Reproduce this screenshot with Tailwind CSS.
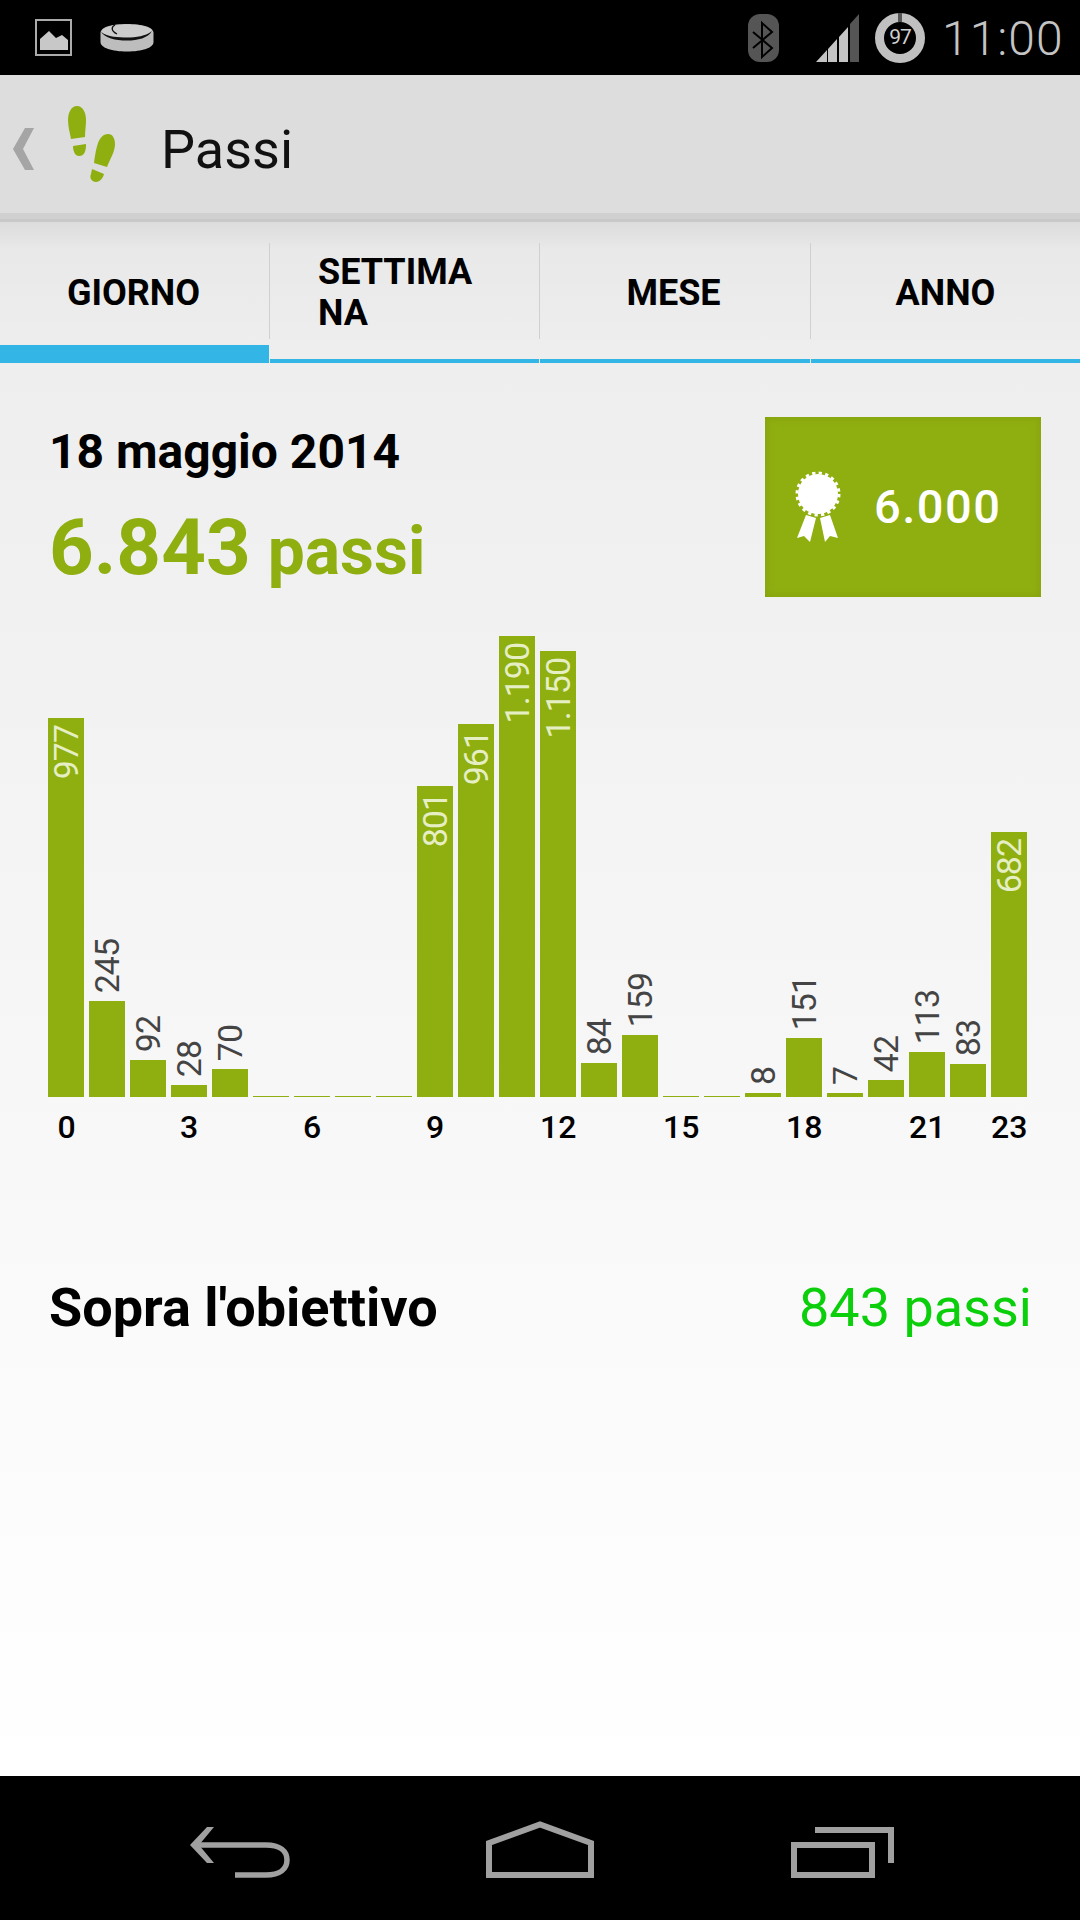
<!DOCTYPE html>
<html lang="it">
<head>
  <meta charset="UTF-8" />
  <title>Passi</title>
  <script src="https://cdn.jsdelivr.net/npm/@tailwindcss/browser@4"></script>
</head>
<body class="bg-black">
  <div class="w-[1080px] h-[1920px] flex flex-col overflow-hidden font-[Roboto,sans-serif]">

    <!-- Status bar -->
    <div class="h-[75px] bg-black flex items-center shrink-0">
      <svg class="ml-[35px] w-[37px] h-[37px] -mt-[1px]" viewBox="0 0 37 37">
        <rect x="1" y="1" width="35" height="35" fill="none" stroke="#ababab" stroke-width="2"/>
        <path d="M5 31 V20 L14 12 L21 19 L27 16 L33 21 V31 Z" fill="#c8c8c8"/>
      </svg>
      <svg class="ml-[28px] w-[54px] h-[30px]" viewBox="0 0 54 30">
        <path d="M0.5 10 C0.5 4 12 1 27 1 C42 1 53.5 4 53.5 10 V19 C53.5 25 42 28.500 27 28.500 C12 28.500 0.500 25 0.500 19 Z" fill="#bdbdbd"/>
        <ellipse cx="27" cy="8" rx="25" ry="6.500" fill="#cccccc"/>
        <path d="M1 9 C8 14 18 14.500 27 14.500 C36 14.500 46 13 52 8 C48 15 38 17.500 27 17.500 C15 17.500 5 15 1 9 Z" fill="#111"/>
        <path d="M15 2 C11 4 11 8 17 11" fill="none" stroke="#111" stroke-width="1.300"/>
      </svg>
      <svg class="ml-[594px] w-[31px] h-[48px]" viewBox="0 0 31 48">
        <rect width="31" height="48" rx="12" fill="#555555"/>
        <path d="M5 18 L24 34 L14 43 V9 L24 18 L5 34" fill="none" stroke="#000" stroke-width="2"/>
      </svg>
      <svg class="ml-[37px] w-[43px] h-[48px]" viewBox="0 0 43 48">
        <path d="M0 48 L11 36 V48 Z M12 35 L21 25 V48 H12 Z M23 23 L32 13 V48 H23 Z" fill="#c4c4c4"/>
        <path d="M34 10 L43 0 V48 H34 Z" fill="#555555"/>
      </svg>
      <div class="ml-[16px] relative w-[50px] h-[50px] rounded-full border-[9px] border-[#c0c0c0] flex items-center justify-center">
        <div class="absolute -top-[9px] left-[14px] w-[4px] h-[9px] bg-[#555555]"></div>
        <span class="text-[21px] leading-none text-[#cfcfcf] tracking-[-1px]">97</span>
      </div>
      <span class="ml-[17px] mt-[2px] text-[48px] leading-none font-light text-[#c4c4c4] tracking-[1px]">11:00</span>
    </div>

    <!-- Action bar -->
    <div class="h-[138px] bg-[#dddddd] flex items-center shrink-0">
      <svg class="ml-[13px] w-[21px] h-[42px] mt-[9px]" viewBox="0 0 21 42">
        <path d="M12 0 H21 L10 21 L21 42 H12 L0 21 Z" fill="#a5a5a5"/>
      </svg>
      <svg class="ml-[32px] w-[52px] h-[78px]" viewBox="0 0 52 78">
        <g fill="#8fae10">
          <path d="M11 1 C17 1 20 8 20 15 C20 21 19 26 19 32 L5 34 C4 28 2 22 2 15 C2 8 5 1 11 1 Z"/>
          <path d="M7 41 L20 39 C20 45 19 51 13 51 C9 51 7 46 7 41 Z"/>
          <path d="M42 29 C47 29 49 34 49 39 C49 47 44 54 41 62 L28 58 C29 50 30 44 32 38 C34 33 37 29 42 29 Z"/>
          <path d="M26 64 L38 69 C37 73 34 77 30 77 C26 77 23 73 25 69 Z"/>
        </g>
      </svg>
      <span class="ml-[43px] mt-[12px] text-[54px] leading-none text-[#111111]">Passi</span>
    </div>
    <div class="h-[6px] bg-[#d0d0d0] shrink-0"></div>
    <div class="h-[3px] bg-[#c8c8c8] shrink-0"></div>

    <!-- Main content -->
    <div class="flex-1 flex flex-col bg-[linear-gradient(to_bottom,#dcdcdc_0px,#e9e9e9_28px,#eeeeee_130px,#f1f1f1_380px,#f8f8f8_930px,#ffffff_1554px)]">

      <!-- Tabs -->
      <div class="mt-[21px] flex h-[120px] text-[36px] leading-[41px] font-bold text-black">
        <div class="w-[270px] flex flex-col">
          <div class="h-[96px] border-r border-[#d0d0d0] flex items-center justify-center pt-[4px] pr-[2px]">GIORNO</div>
          <div class="mt-auto h-[18px] mr-[1px] bg-[#33b5e5]"></div>
        </div>
        <div class="w-[270px] flex flex-col">
          <div class="h-[96px] border-r border-[#d0d0d0] flex items-center pl-[48px] pt-[4px]">SETTIMA<br />NA</div>
          <div class="mt-auto h-[4px] mr-[1px] bg-[#33b5e5]"></div>
        </div>
        <div class="w-[271px] flex flex-col">
          <div class="h-[96px] border-r border-[#d0d0d0] flex items-center justify-center pt-[4px] pr-[3px]">MESE</div>
          <div class="mt-auto h-[4px] mr-[1px] bg-[#33b5e5]"></div>
        </div>
        <div class="w-[269px] flex flex-col">
          <div class="h-[96px] flex items-center justify-center pt-[4px]">ANNO</div>
          <div class="mt-auto h-[4px] bg-[#33b5e5]"></div>
        </div>
      </div>

      <!-- Day summary -->
      <div class="mt-[54px] pl-[49px] pr-[39px] flex justify-between">
        <div class="pt-[7px]">
          <div class="text-[48px] leading-[56px] font-bold text-black">18 maggio 2014</div>
          <div class="mt-[23px] flex items-baseline gap-[17px] font-bold text-[#8fae10]">
            <span class="text-[78px] leading-[90px]">6.843</span>
            <span class="text-[66px] leading-[90px]">passi</span>
          </div>
        </div>
        <div class="w-[276px] h-[180px] bg-[#8fae10] shadow-[inset_0_0_8px_#849f0e] flex items-center">
          <svg class="ml-[28px] w-[50px] h-[74px]" viewBox="0 0 50 74">
            <circle cx="25" cy="24" r="20" fill="#fff"/>
            <circle cx="25" cy="24" r="21" fill="none" stroke="#fff" stroke-width="3" stroke-dasharray="3.300 3.300"/>
            <path d="M13 45 L23 48 L17 72 L11 66 L4 68 Z M27 48 L37 45 L45 68 L37 66 L32 72 Z" fill="#fff"/>
          </svg>
          <span class="ml-[31px] -mt-[2px] text-[47px] leading-none font-medium tracking-[1.500px] text-white">6.000</span>
        </div>
      </div>

      <!-- Hourly chart -->
      <div class="ml-[48px] h-[500px] flex items-end gap-[5px] text-[34px] leading-[36px] tracking-[-1px]">
        <div class="w-[36px] h-[379px] bg-[#8fae10] flex justify-center pt-[7px] text-[#e6efc4]"><span class="h-fit [writing-mode:vertical-rl] rotate-180">977</span></div>
        <div class="w-[36px] flex flex-col items-center text-[#444444]"><span class="mb-[8px] [writing-mode:vertical-rl] rotate-180">245</span><div class="w-full h-[96px] bg-[#8fae10]"></div></div>
        <div class="w-[36px] flex flex-col items-center text-[#444444]"><span class="mb-[8px] [writing-mode:vertical-rl] rotate-180">92</span><div class="w-full h-[37px] bg-[#8fae10]"></div></div>
        <div class="w-[36px] flex flex-col items-center text-[#444444]"><span class="mb-[8px] [writing-mode:vertical-rl] rotate-180">28</span><div class="w-full h-[12px] bg-[#8fae10]"></div></div>
        <div class="w-[36px] flex flex-col items-center text-[#444444]"><span class="mb-[8px] [writing-mode:vertical-rl] rotate-180">70</span><div class="w-full h-[28px] bg-[#8fae10]"></div></div>
        <div class="w-[36px] h-[1px] bg-[#8fae10]"></div>
        <div class="w-[36px] h-[1px] bg-[#8fae10]"></div>
        <div class="w-[36px] h-[1px] bg-[#8fae10]"></div>
        <div class="w-[36px] h-[1px] bg-[#8fae10]"></div>
        <div class="w-[36px] h-[311px] bg-[#8fae10] flex justify-center pt-[7px] text-[#e6efc4]"><span class="h-fit [writing-mode:vertical-rl] rotate-180">801</span></div>
        <div class="w-[36px] h-[373px] bg-[#8fae10] flex justify-center pt-[7px] text-[#e6efc4]"><span class="h-fit [writing-mode:vertical-rl] rotate-180">961</span></div>
        <div class="w-[36px] h-[461px] bg-[#8fae10] flex justify-center pt-[7px] text-[#e6efc4]"><span class="h-fit [writing-mode:vertical-rl] rotate-180">1.190</span></div>
        <div class="w-[36px] h-[446px] bg-[#8fae10] flex justify-center pt-[7px] text-[#e6efc4]"><span class="h-fit [writing-mode:vertical-rl] rotate-180">1.150</span></div>
        <div class="w-[36px] flex flex-col items-center text-[#444444]"><span class="mb-[8px] [writing-mode:vertical-rl] rotate-180">84</span><div class="w-full h-[34px] bg-[#8fae10]"></div></div>
        <div class="w-[36px] flex flex-col items-center text-[#444444]"><span class="mb-[8px] [writing-mode:vertical-rl] rotate-180">159</span><div class="w-full h-[62px] bg-[#8fae10]"></div></div>
        <div class="w-[36px] h-[1px] bg-[#8fae10]"></div>
        <div class="w-[36px] h-[1px] bg-[#8fae10]"></div>
        <div class="w-[36px] flex flex-col items-center text-[#444444]"><span class="mb-[8px] [writing-mode:vertical-rl] rotate-180">8</span><div class="w-full h-[4px] bg-[#8fae10]"></div></div>
        <div class="w-[36px] flex flex-col items-center text-[#444444]"><span class="mb-[8px] [writing-mode:vertical-rl] rotate-180">151</span><div class="w-full h-[59px] bg-[#8fae10]"></div></div>
        <div class="w-[36px] flex flex-col items-center text-[#444444]"><span class="mb-[8px] [writing-mode:vertical-rl] rotate-180">7</span><div class="w-full h-[4px] bg-[#8fae10]"></div></div>
        <div class="w-[36px] flex flex-col items-center text-[#444444]"><span class="mb-[8px] [writing-mode:vertical-rl] rotate-180">42</span><div class="w-full h-[17px] bg-[#8fae10]"></div></div>
        <div class="w-[36px] flex flex-col items-center text-[#444444]"><span class="mb-[8px] [writing-mode:vertical-rl] rotate-180">113</span><div class="w-full h-[45px] bg-[#8fae10]"></div></div>
        <div class="w-[36px] flex flex-col items-center text-[#444444]"><span class="mb-[8px] [writing-mode:vertical-rl] rotate-180">83</span><div class="w-full h-[33px] bg-[#8fae10]"></div></div>
        <div class="w-[36px] h-[265px] bg-[#8fae10] flex justify-center pt-[7px] text-[#e6efc4]"><span class="h-fit [writing-mode:vertical-rl] rotate-180">682</span></div>
      </div>

      <!-- Hour axis -->
      <div class="ml-[48px] mt-[12px] flex gap-[5px] text-[32px] leading-[36px] font-medium text-black">
        <span class="w-[36px] text-center pl-[1px]">0</span>
        <span class="w-[36px]"></span>
        <span class="w-[36px]"></span>
        <span class="w-[36px] text-center">3</span>
        <span class="w-[36px]"></span>
        <span class="w-[36px]"></span>
        <span class="w-[36px] text-center">6</span>
        <span class="w-[36px]"></span>
        <span class="w-[36px]"></span>
        <span class="w-[36px] text-center">9</span>
        <span class="w-[36px]"></span>
        <span class="w-[36px]"></span>
        <span class="w-[36px] text-center">12</span>
        <span class="w-[36px]"></span>
        <span class="w-[36px]"></span>
        <span class="w-[36px] text-center">15</span>
        <span class="w-[36px]"></span>
        <span class="w-[36px]"></span>
        <span class="w-[36px] text-center">18</span>
        <span class="w-[36px]"></span>
        <span class="w-[36px]"></span>
        <span class="w-[36px] text-center">21</span>
        <span class="w-[36px]"></span>
        <span class="w-[36px] text-center">23</span>
      </div>

      <!-- Goal difference -->
      <div class="mt-[133px] pl-[49px] pr-[48px] flex justify-between items-baseline leading-[60px]">
        <span class="text-[54px] font-bold text-black">Sopra l'obiettivo</span>
        <span class="text-[54px] text-[#0ccf0c]">843 passi</span>
      </div>
    </div>

    <!-- Navigation bar -->
    <div class="h-[144px] bg-black shrink-0 flex items-start">
      <svg class="ml-[190px] mt-[51px] w-[100px] h-[51px]" viewBox="0 0 100 51">
        <path d="M17 0 H24 L9 18 L24 36 H17 L0 18 Z" fill="#a0a0a0"/>
        <path d="M5 18 H76 C90 18 97 24 97 33 C97 42 90 48 76 48 H45" fill="none" stroke="#a0a0a0" stroke-width="5.500"/>
      </svg>
      <svg class="ml-[196px] mt-[45px] w-[108px] h-[57px]" viewBox="0 0 108 57">
        <path d="M3 54 V22 L54 3.500 L105 22 V54 Z" fill="none" stroke="#a0a0a0" stroke-width="6"/>
      </svg>
      <svg class="ml-[197px] mt-[51px] w-[103px] h-[51px]" viewBox="0 0 103 51">
        <rect x="3" y="18" width="78" height="30" fill="none" stroke="#a0a0a0" stroke-width="6"/>
        <path d="M24 3 H100 V36" fill="none" stroke="#a0a0a0" stroke-width="6"/>
      </svg>
    </div>
  </div>
</body>
</html>
